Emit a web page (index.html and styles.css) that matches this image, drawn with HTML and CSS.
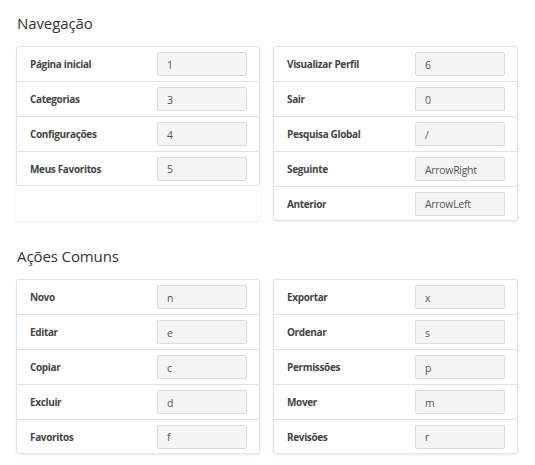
FILE: index.html
```
<!DOCTYPE html>
<html lang="pt">
<head>
<meta charset="utf-8">
<link rel="stylesheet" href="styles.css">
</head>
<body>
<div class="page">
  <section class="section">
    <h2 class="title">Navegação</h2>
    <div class="grid">
      <div class="col">
        <div class="list">
          <div class="row"><span class="label">Página inicial</span><span class="key">1</span></div>
          <div class="row"><span class="label">Categorias</span><span class="key">3</span></div>
          <div class="row"><span class="label">Configurações</span><span class="key">4</span></div>
          <div class="row"><span class="label">Meus Favoritos</span><span class="key">5</span></div>
        </div>
      </div>
      <div class="col">
        <div class="list">
          <div class="row"><span class="label">Visualizar Perfil</span><span class="key">6</span></div>
          <div class="row"><span class="label">Sair</span><span class="key">0</span></div>
          <div class="row"><span class="label">Pesquisa Global</span><span class="key">/</span></div>
          <div class="row"><span class="label">Seguinte</span><span class="key">ArrowRight</span></div>
          <div class="row"><span class="label">Anterior</span><span class="key">ArrowLeft</span></div>
        </div>
      </div>
    </div>
  </section>
  <section class="section">
    <h2 class="title">Ações Comuns</h2>
    <div class="grid">
      <div class="col">
        <div class="list">
          <div class="row"><span class="label">Novo</span><span class="key">n</span></div>
          <div class="row"><span class="label">Editar</span><span class="key">e</span></div>
          <div class="row"><span class="label">Copiar</span><span class="key">c</span></div>
          <div class="row"><span class="label">Excluir</span><span class="key">d</span></div>
          <div class="row"><span class="label">Favoritos</span><span class="key">f</span></div>
        </div>
      </div>
      <div class="col">
        <div class="list">
          <div class="row"><span class="label">Exportar</span><span class="key">x</span></div>
          <div class="row"><span class="label">Ordenar</span><span class="key">s</span></div>
          <div class="row"><span class="label">Permissões</span><span class="key">p</span></div>
          <div class="row"><span class="label">Mover</span><span class="key">m</span></div>
          <div class="row"><span class="label">Revisões</span><span class="key">r</span></div>
        </div>
      </div>
    </div>
  </section>
</div>
</body>
</html>
```
FILE: styles.css
```
html, body {
  margin: 0;
  padding: 0;
  background: #fff;
}
body {
  font-family: "Open Sans", "Noto Sans", sans-serif;
  color: #333;
}
.page {
  padding: 10px 17px 0 16px;
  width: 502px;
}
.section {
  margin-bottom: 22px;
}
.title {
  margin: 0 0 10px 1px;
  font-size: 15px;
  font-weight: 400;
  line-height: 26px;
  color: #333;
  letter-spacing: -0.1px;
}
.grid {
  display: grid;
  grid-template-columns: 244px 245px;
  column-gap: 13px;
  align-items: stretch;
}
.col {
  background: #fff;
  box-shadow: 0 1px 3px rgba(0, 0, 0, 0.08);
  border-radius: 3px;
}
.list {
  border: 1px solid #e3e3e3;
  border-radius: 3px;
}
.row {
  display: flex;
  align-items: center;
  justify-content: space-between;
  height: 34px;
  padding: 0 12px 0 13px;
  border-bottom: 1px solid #e3e3e3;
}
.row:last-child {
  border-bottom: 0;
  height: 33px;
}
.label {
  font-size: 10px;
  font-weight: 700;
  color: #444;
  letter-spacing: -0.35px;
}
.key {
  box-sizing: border-box;
  width: 90px;
  height: 24px;
  padding: 1px 9px 0;
  display: flex;
  align-items: center;
  background: #f5f5f5;
  border: 1px solid #dcdcdc;
  border-radius: 2px;
  font-size: 10.5px;
  color: #555;
  letter-spacing: -0.3px;
}
```
